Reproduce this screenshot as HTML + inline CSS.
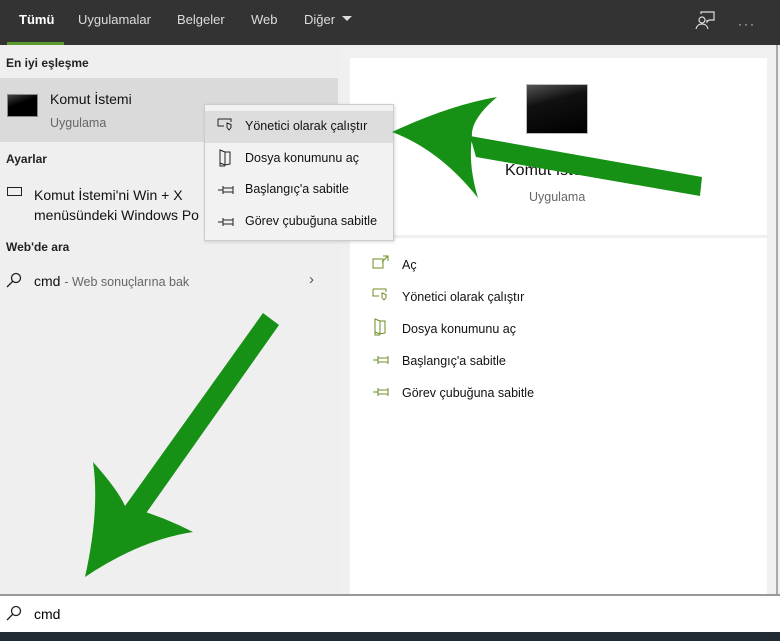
<!DOCTYPE html>
<html><head><meta charset="utf-8"><style>
*{margin:0;padding:0;box-sizing:border-box}
body{width:780px;height:641px;overflow:hidden;background:#efefef;font-family:"Liberation Sans",sans-serif;position:relative;color:#000}
.abs{position:absolute}
.top{left:0;top:0;width:780px;height:45px;background:#333}
.tab{position:absolute;top:12px;font-size:13px;color:#ddd}
.left{left:0;top:45px;width:340px;height:550px;background:#efefef}
.right{left:340px;top:45px;width:440px;height:550px;background:#f0f0f0}
.h{font-size:12px;font-weight:bold;color:#222}
.t{font-size:14px;color:#111}
.s{font-size:12.5px;color:#666}
.mi{position:absolute;left:40px;font-size:12.5px;color:#111}
.ri{position:absolute;left:402px;font-size:12.5px;color:#111}
</style></head><body>
<div class="abs top"></div>
<div class="tab" style="left:19px;color:#fff;font-weight:bold">Tümü</div>
<div class="abs" style="left:7px;top:42px;width:57px;height:3px;background:#5b9a2a"></div>
<div class="tab" style="left:78px">Uygulamalar</div>
<div class="tab" style="left:177px">Belgeler</div>
<div class="tab" style="left:251px">Web</div>
<div class="tab" style="left:304px">Diğer</div>
<svg class="abs" style="left:341px;top:15px" width="12" height="8"><path d="M1 1h10L6 6z" fill="#ddd"/></svg>
<svg class="abs" style="left:694px;top:10px" width="22" height="22" fill="none" stroke="#ddd" stroke-width="1.2"><circle cx="8" cy="10" r="3"/><path d="M2 19c1-4 3-5 6-5s5 1 6 5M7 4V2h13v8h-5l-2 2v-2"/></svg>
<div class="abs" style="left:738px;top:17px;color:#ddd;font-size:12px;letter-spacing:2px">···</div>

<div class="abs left"></div>
<div class="abs h" style="left:6px;top:56px">En iyi eşleşme</div>
<div class="abs" style="left:0;top:78px;width:338px;height:64px;background:#dadada"></div>
<div class="abs" style="left:7px;top:94px;width:31px;height:23px;background:linear-gradient(160deg,#444 0%,#000 40%);border:1px solid #888"></div>
<div class="abs t" style="left:50px;top:91px">Komut İstemi</div>
<div class="abs s" style="left:50px;top:116px">Uygulama</div>
<div class="abs h" style="left:6px;top:152px">Ayarlar</div>
<div class="abs" style="left:7px;top:187px;width:15px;height:9px;border:1px solid #222"></div>
<div class="abs t" style="left:34px;top:185px;line-height:20px">Komut İstemi'ni Win + X<br>menüsündeki Windows Po</div>
<div class="abs h" style="left:6px;top:240px">Web'de ara</div>
<svg class="abs" style="left:6px;top:272px" width="16" height="16" fill="none" stroke="#222" stroke-width="1.3"><circle cx="10" cy="6" r="4.5"/><path d="M7 9l-6 6"/></svg>
<div class="abs t" style="left:34px;top:273px">cmd <span style="color:#666;font-size:12.5px">- Web sonuçlarına bak</span></div>
<div class="abs" style="left:309px;top:271px;color:#555;font-size:15px">›</div>

<div class="abs right"></div>
<div class="abs" style="left:350px;top:58px;width:417px;height:177px;background:#fff"></div>
<div class="abs" style="left:350px;top:238px;width:417px;height:357px;background:#fff"></div>
<div class="abs" style="left:776px;top:45px;width:2px;height:550px;background:#aaa"></div>
<div class="abs" style="left:526px;top:84px;width:62px;height:50px;background:linear-gradient(165deg,#555 0%,#111 35%,#000 100%);border:1px solid #bbb"></div>
<div class="abs" style="left:505px;top:162px;font-size:16px;color:#111">Komut İstemi</div>
<div class="abs s" style="left:529px;top:190px">Uygulama</div>
<svg class="abs" style="left:372px;top:255px" width="18" height="160" fill="none" stroke="#6b8e23" stroke-width="1">
<path d="M1 4h10v9H1zM11 1h5v5M16 1l-6 6"/>
<path d="M1 34h13v3M1 34v7h6M10 38l4 1.5v3l-2 2.5-2-2.5v-3z"/>
<path d="M3 64l5 2v13l-5-2zM8 66h5v12l-5 1M3 77v3h5"/>
<path d="M1 105h5M6 101v8M6 103h10v4H6M16 101v8"/>
<path d="M1 137h5M6 133v8M6 135h10v4H6M16 133v8"/>
</svg>
<div class="ri" style="top:258px">Aç</div>
<div class="ri" style="top:290px">Yönetici olarak çalıştır</div>
<div class="ri" style="top:322px">Dosya konumunu aç</div>
<div class="ri" style="top:354px">Başlangıç'a sabitle</div>
<div class="ri" style="top:386px">Görev çubuğuna sabitle</div>

<div class="abs" style="left:204px;top:104px;width:190px;height:137px;background:#f2f2f2;border:1px solid #ccc;box-shadow:1px 1px 3px rgba(0,0,0,.15)">
<div class="abs" style="left:0;top:6px;width:188px;height:32px;background:#ddd"></div>
<svg class="abs" style="left:12px;top:13px" width="18" height="120" fill="none" stroke="#222" stroke-width="1">
<path d="M1 1h13v3M1 1v7h6M10 5l4 1.5v3l-2 2.5-2-2.5v-3z"/>
<path d="M3 32l5 2v13l-5-2zM8 34h5v12l-5 1M3 45v3h5"/>
<path d="M1 72h5M6 68v8M6 70h10v4H6M16 68v8"/>
<path d="M1 104h5M6 100v8M6 102h10v4H6M16 100v8"/>
</svg>
<div class="mi" style="top:14px">Yönetici olarak çalıştır</div>
<div class="mi" style="top:46px">Dosya konumunu aç</div>
<div class="mi" style="top:77px">Başlangıç'a sabitle</div>
<div class="mi" style="top:109px">Görev çubuğuna sabitle</div>
</div>

<svg class="abs" style="left:0;top:0" width="780" height="641">
<path d="M702 177L470 136L476 157L700 196Z" fill="#169116"/>
<path d="M392 132Q450 105 497 97Q470 120 472 137Q468 165 478 198Q440 150 392 132Z" fill="#169116"/>
<path d="M263 313L279 325L142 519L125 506Z" fill="#169116"/>
<path d="M85 577Q100 510 93 462Q118 490 125 506Q160 515 193 532Q140 540 85 577Z" fill="#169116"/>
</svg>

<div class="abs" style="left:0;top:594px;width:780px;height:2px;background:#999"></div>
<div class="abs" style="left:0;top:596px;width:780px;height:36px;background:#fff"></div>
<svg class="abs" style="left:6px;top:605px" width="16" height="16" fill="none" stroke="#222" stroke-width="1.3"><circle cx="10" cy="6" r="4.5"/><path d="M7 9l-6 6"/></svg>
<div class="abs" style="left:34px;top:606px;font-size:14px">cmd</div>
<div class="abs" style="left:0;top:632px;width:780px;height:9px;background:#1f2a33"></div>
</body></html>
